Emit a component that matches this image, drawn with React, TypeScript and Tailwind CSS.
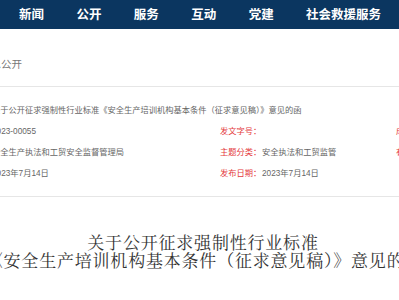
import React from 'react';

const navItems = ['首页', '新闻', '公开', '服务', '互动', '党建', '社会救援服务'];

interface MetaCell {
  label: string;
  value: string;
}

const metaRows: MetaCell[][] = [
  [
    { label: '索引号：', value: '2023-00055' },
    { label: '发文字号：', value: '' },
    { label: '成文日期：', value: '2023年7月14日' },
  ],
  [
    { label: '发文机构：', value: '安全生产执法和工贸安全监督管理局' },
    { label: '主题分类：', value: '安全执法和工贸监管' },
    { label: '有效性：', value: '有效' },
  ],
  [
    { label: '成文日期：', value: '2023年7月14日' },
    { label: '发布日期：', value: '2023年7月14日' },
  ],
];

const App: React.FC = () => {
  return (
    <div
      className="w-[399px] h-[300px] overflow-hidden bg-white"
      style={{ fontFamily: '"Noto Sans CJK SC", "Noto Sans", sans-serif' }}
    >
      {/* Top navigation */}
      <nav className="h-[29px] bg-[#0b3660] flex items-center gap-[32.4px] ml-[-38.4px] whitespace-nowrap">
        {navItems.map((item) => (
          <span key={item} className="text-white font-bold text-[12.5px] leading-none">
            {item}
          </span>
        ))}
      </nav>

      {/* Main content, centred wider than the viewport */}
      <div className="ml-[-117.5px] w-[640px]">
        {/* Breadcrumb */}
        <div className="h-[58px] pt-[20px] pl-[97.5px] border-b border-[#e6e6e6]">
          <span className="text-[10.5px] leading-[14px] text-[#777]">信息公开</span>
        </div>

        {/* Info table */}
        <div
          className="pt-[13.5px] pb-[11.5px] pl-[67.5px] border-b border-[#e6e6e6] text-[8.25px] whitespace-nowrap"
          style={{ fontFamily: '"Liberation Sans", "Noto Sans CJK SC", sans-serif' }}
        >
          <div className="h-[21px] flex items-center">
            <span className="w-[42px] text-[#e4393c]">标题：</span>
            <span className="text-[#666]">
              关于公开征求强制性行业标准《安全生产培训机构基本条件（征求意见稿）》意见的函
            </span>
          </div>
          {metaRows.map((row, i) => (
            <div key={i} className="h-[21px] flex items-center">
              {row.map((cell, j) => (
                <div
                  key={j}
                  className={
                    j === 0 ? 'flex w-[270px]' : j === 1 ? 'flex w-[176px]' : 'flex'
                  }
                >
                  <span className="w-[42px] text-[#e4393c]">{cell.label}</span>
                  <span className="text-[#666]">{cell.value}</span>
                </div>
              ))}
            </div>
          ))}
        </div>

        {/* Title */}
        <h1
          className="mt-[36px] ml-[1px] text-center text-[17px] leading-[18px] tracking-[0.8px] text-[#333] font-normal whitespace-nowrap"
          style={{ fontFamily: '"Noto Serif CJK SC", "Noto Sans CJK SC", serif' }}
        >
          <div>关于公开征求强制性行业标准</div>
          <div className="pl-[2px]">《安全生产培训机构基本条件（征求意见稿）》意见的函</div>
        </h1>
      </div>
    </div>
  );
};

export default App;
